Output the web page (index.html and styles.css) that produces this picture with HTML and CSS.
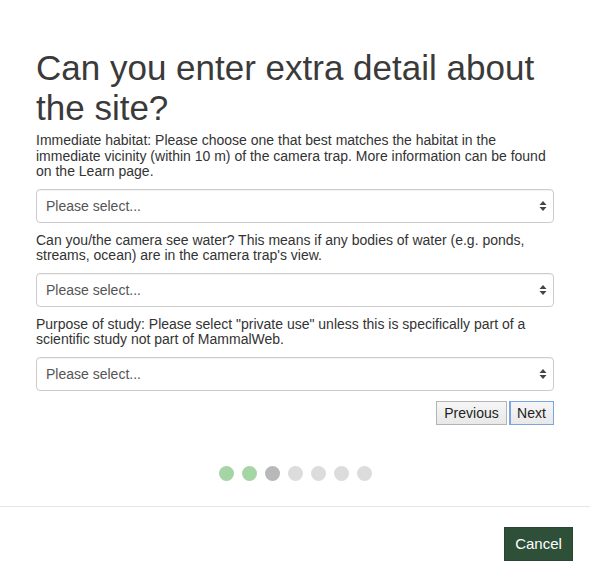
FILE: index.html
```html
<!DOCTYPE html>
<html lang="en">
<head>
  <meta charset="UTF-8">
  <title>Site details</title>
  <meta name="viewport" content="width=device-width, initial-scale=1">
  <link rel="stylesheet" href="styles.css">
</head>
<body>
  <main class="wizard">
    <h1>Can you enter extra detail about the site?</h1>

    <label class="field-label">Immediate habitat: Please choose one that best matches the habitat in the immediate vicinity (within 10 m) of the camera trap. More information can be found on the Learn page.</label>
    <div class="select">
      <span>Please select...</span>
      <svg width="8" height="12" viewBox="0 0 8 12"><path d="M4 1 L7.5 5 H0.5 Z M4 11 L7.5 7 H0.5 Z" fill="#444"/></svg>
    </div>

    <label class="field-label">Can you/the camera see water? This means if any bodies of water (e.g. ponds, streams, ocean) are in the camera trap's view.</label>
    <div class="select">
      <span>Please select...</span>
      <svg width="8" height="12" viewBox="0 0 8 12"><path d="M4 1 L7.5 5 H0.5 Z M4 11 L7.5 7 H0.5 Z" fill="#444"/></svg>
    </div>

    <label class="field-label">Purpose of study: Please select "private use" unless this is specifically part of a scientific study not part of MammalWeb.</label>
    <div class="select">
      <span>Please select...</span>
      <svg width="8" height="12" viewBox="0 0 8 12"><path d="M4 1 L7.5 5 H0.5 Z M4 11 L7.5 7 H0.5 Z" fill="#444"/></svg>
    </div>

    <div class="nav">
      <button type="button" class="nav-btn">Previous</button>
      <button type="button" class="nav-btn focused">Next</button>
    </div>

    <div class="steps">
      <span class="dot done"></span>
      <span class="dot done"></span>
      <span class="dot current"></span>
      <span class="dot"></span>
      <span class="dot"></span>
      <span class="dot"></span>
      <span class="dot"></span>
    </div>
  </main>
  <footer class="footer">
    <button type="button" class="cancel">Cancel</button>
  </footer>
</body>
</html>
```

FILE: styles.css
```css
body { margin: 0; background: #fff; font-family: "Liberation Sans", Arial, sans-serif; color: #333; }
.wizard { padding: 48px 36px 0 36px; display: flex; flex-direction: column; }
h1 { font-size: 35px; font-weight: normal; line-height: 40px; margin: 0 0 5px 0; color: #3a3a3a; }
.field-label { font-size: 14px; line-height: 15.5px; color: #333; margin-bottom: 9px; }
.select { height: 34px; box-sizing: border-box; border: 1px solid #ccc; border-radius: 4px; display: flex; align-items: center; justify-content: space-between; padding: 0 6px 0 9px; font-size: 14px; color: #555; margin-bottom: 10px; box-shadow: inset 0 1px 1px rgba(0,0,0,0.05); }
.nav { display: flex; justify-content: flex-end; gap: 2px; }
.nav-btn { font-family: "Liberation Sans", Arial, sans-serif; font-size: 14px; height: 24px; width: 71px; padding: 0; background: linear-gradient(#f6f6f6, #e8e8e8); border: 1px solid #b4b4b4; color: #222; border-radius: 0; }
.nav-btn.focused { width: 45px; border: 1px solid #7aa4e6; box-shadow: inset 1px 0 0 #7aa4e6; }
.steps { display: flex; justify-content: center; gap: 8px; margin-top: 41px; padding-left: 1px; }
.dot { width: 15px; height: 15px; border-radius: 50%; background: #dcdcdc; }
.dot.done { background: #a5d5a5; }
.dot.current { background: #b8b8b8; }
.footer { margin-top: 25px; border-top: 1px solid #e5e5e5; padding: 20px 17px 0 0; display: flex; justify-content: flex-end; }
.cancel { font-family: "Liberation Sans", Arial, sans-serif; font-size: 15px; color: #fff; background: #2e5038; border: 1px solid #284631; height: 34px; width: 69px; padding: 0; }
```
